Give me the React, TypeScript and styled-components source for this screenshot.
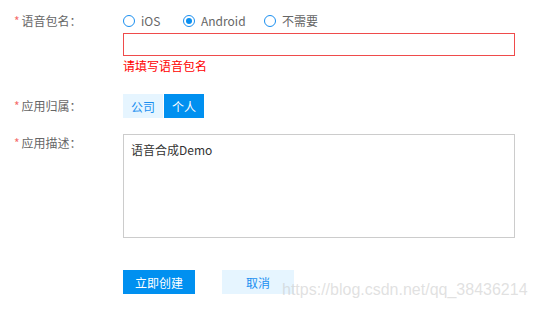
import styled, { createGlobalStyle } from 'styled-components';

const GlobalStyle = createGlobalStyle`
  html, body {
    margin: 0;
    padding: 0;
    background: #fff;
  }
  body {
    font-family: "Noto Sans CJK SC", "Noto Sans", sans-serif;
    font-size: 12px;
    color: #666;
  }
`;

const Page = styled.div`
  position: relative;
  width: 535px;
  height: 314px;
  overflow: hidden;
  padding-top: 12px;
  box-sizing: border-box;
`;

const Row = styled.div<{ $align?: string; $gap?: number }>`
  display: grid;
  grid-template-columns: 123px 392px;
  align-items: ${({ $align }) => $align ?? 'start'};
  margin-top: ${({ $gap }) => $gap ?? 0}px;
`;

const Label = styled.div`
  padding-left: 14px;
  line-height: 18px;
  height: 18px;
  color: #666;
  white-space: nowrap;
`;

const Star = styled.span`
  color: #f56c6c;
  margin-right: 2px;
`;

const RadioGroup = styled.div`
  display: flex;
  align-items: center;
  height: 18px;
`;

const RadioItem = styled.label<{ $width: number }>`
  display: inline-flex;
  align-items: center;
  gap: 6px;
  width: ${({ $width }) => $width}px;
  color: #666;
  line-height: 18px;
`;

const Circle = styled.span<{ $checked?: boolean }>`
  width: 10px;
  height: 10px;
  border-radius: 50%;
  border: 1px solid #1a8ff0;
  box-sizing: content-box;
  display: inline-flex;
  align-items: center;
  justify-content: center;

  &::after {
    content: '';
    width: 6px;
    height: 6px;
    border-radius: 50%;
    background: ${({ $checked }) => ($checked ? '#0a8ff0' : 'transparent')};
  }
`;

const TextInput = styled.div`
  margin-top: 3px;
  height: 23px;
  border: 1px solid #ef4b4b;
  box-sizing: border-box;
`;

const ErrorText = styled.div`
  color: #f00;
  line-height: 20px;
  height: 20px;
`;

const Segmented = styled.div`
  display: flex;
  gap: 1px;
`;

const SegButton = styled.button<{ $active?: boolean }>`
  width: 40px;
  height: 24px;
  border: none;
  padding: 0;
  font: inherit;
  font-size: 12px;
  cursor: pointer;
  background: ${({ $active }) => ($active ? '#0090f0' : '#e6f5ff')};
  color: ${({ $active }) => ($active ? '#fff' : '#1a8ff0')};
`;

const TextArea = styled.div`
  height: 104px;
  border: 1px solid #ccc;
  box-sizing: border-box;
  padding: 6px 7px;
  color: #333;
  font-size: 12px;
  line-height: 18px;
`;

const Actions = styled.div`
  display: flex;
  gap: 27px;
`;

const ActionButton = styled.button<{ $primary?: boolean }>`
  width: 72px;
  height: 24px;
  border: none;
  padding: 0;
  font: inherit;
  font-size: 12px;
  cursor: pointer;
  background: ${({ $primary }) => ($primary ? '#0090f0' : '#e6f5ff')};
  color: ${({ $primary }) => ($primary ? '#fff' : '#1a8ff0')};
`;

const Watermark = styled.div`
  position: absolute;
  left: 282px;
  top: 281px;
  font-family: "Liberation Sans", Arial, sans-serif;
  font-size: 16px;
  color: rgba(200, 200, 200, 0.55);
  pointer-events: none;
`;

export default function App() {
  return (
    <>
      <GlobalStyle />
      <Page>
        <Row>
          <Label>
            <Star>*</Star>语音包名：
          </Label>
          <div>
            <RadioGroup>
              <RadioItem $width={60}>
                <Circle />
                iOS
              </RadioItem>
              <RadioItem $width={81}>
                <Circle $checked />
                Android
              </RadioItem>
              <RadioItem $width={70}>
                <Circle />
                不需要
              </RadioItem>
            </RadioGroup>
            <TextInput />
            <ErrorText>请填写语音包名</ErrorText>
          </div>
        </Row>

        <Row $align="center" $gap={18}>
          <Label>
            <Star>*</Star>应用归属：
          </Label>
          <Segmented>
            <SegButton>公司</SegButton>
            <SegButton $active>个人</SegButton>
          </Segmented>
        </Row>

        <Row $gap={16}>
          <Label>
            <Star>*</Star>应用描述：
          </Label>
          <TextArea>语音合成Demo</TextArea>
        </Row>

        <Row $gap={32}>
          <div />
          <Actions>
            <ActionButton $primary>立即创建</ActionButton>
            <ActionButton>取消</ActionButton>
          </Actions>
        </Row>

        <Watermark>https://blog.csdn.net/qq_38436214</Watermark>
      </Page>
    </>
  );
}
